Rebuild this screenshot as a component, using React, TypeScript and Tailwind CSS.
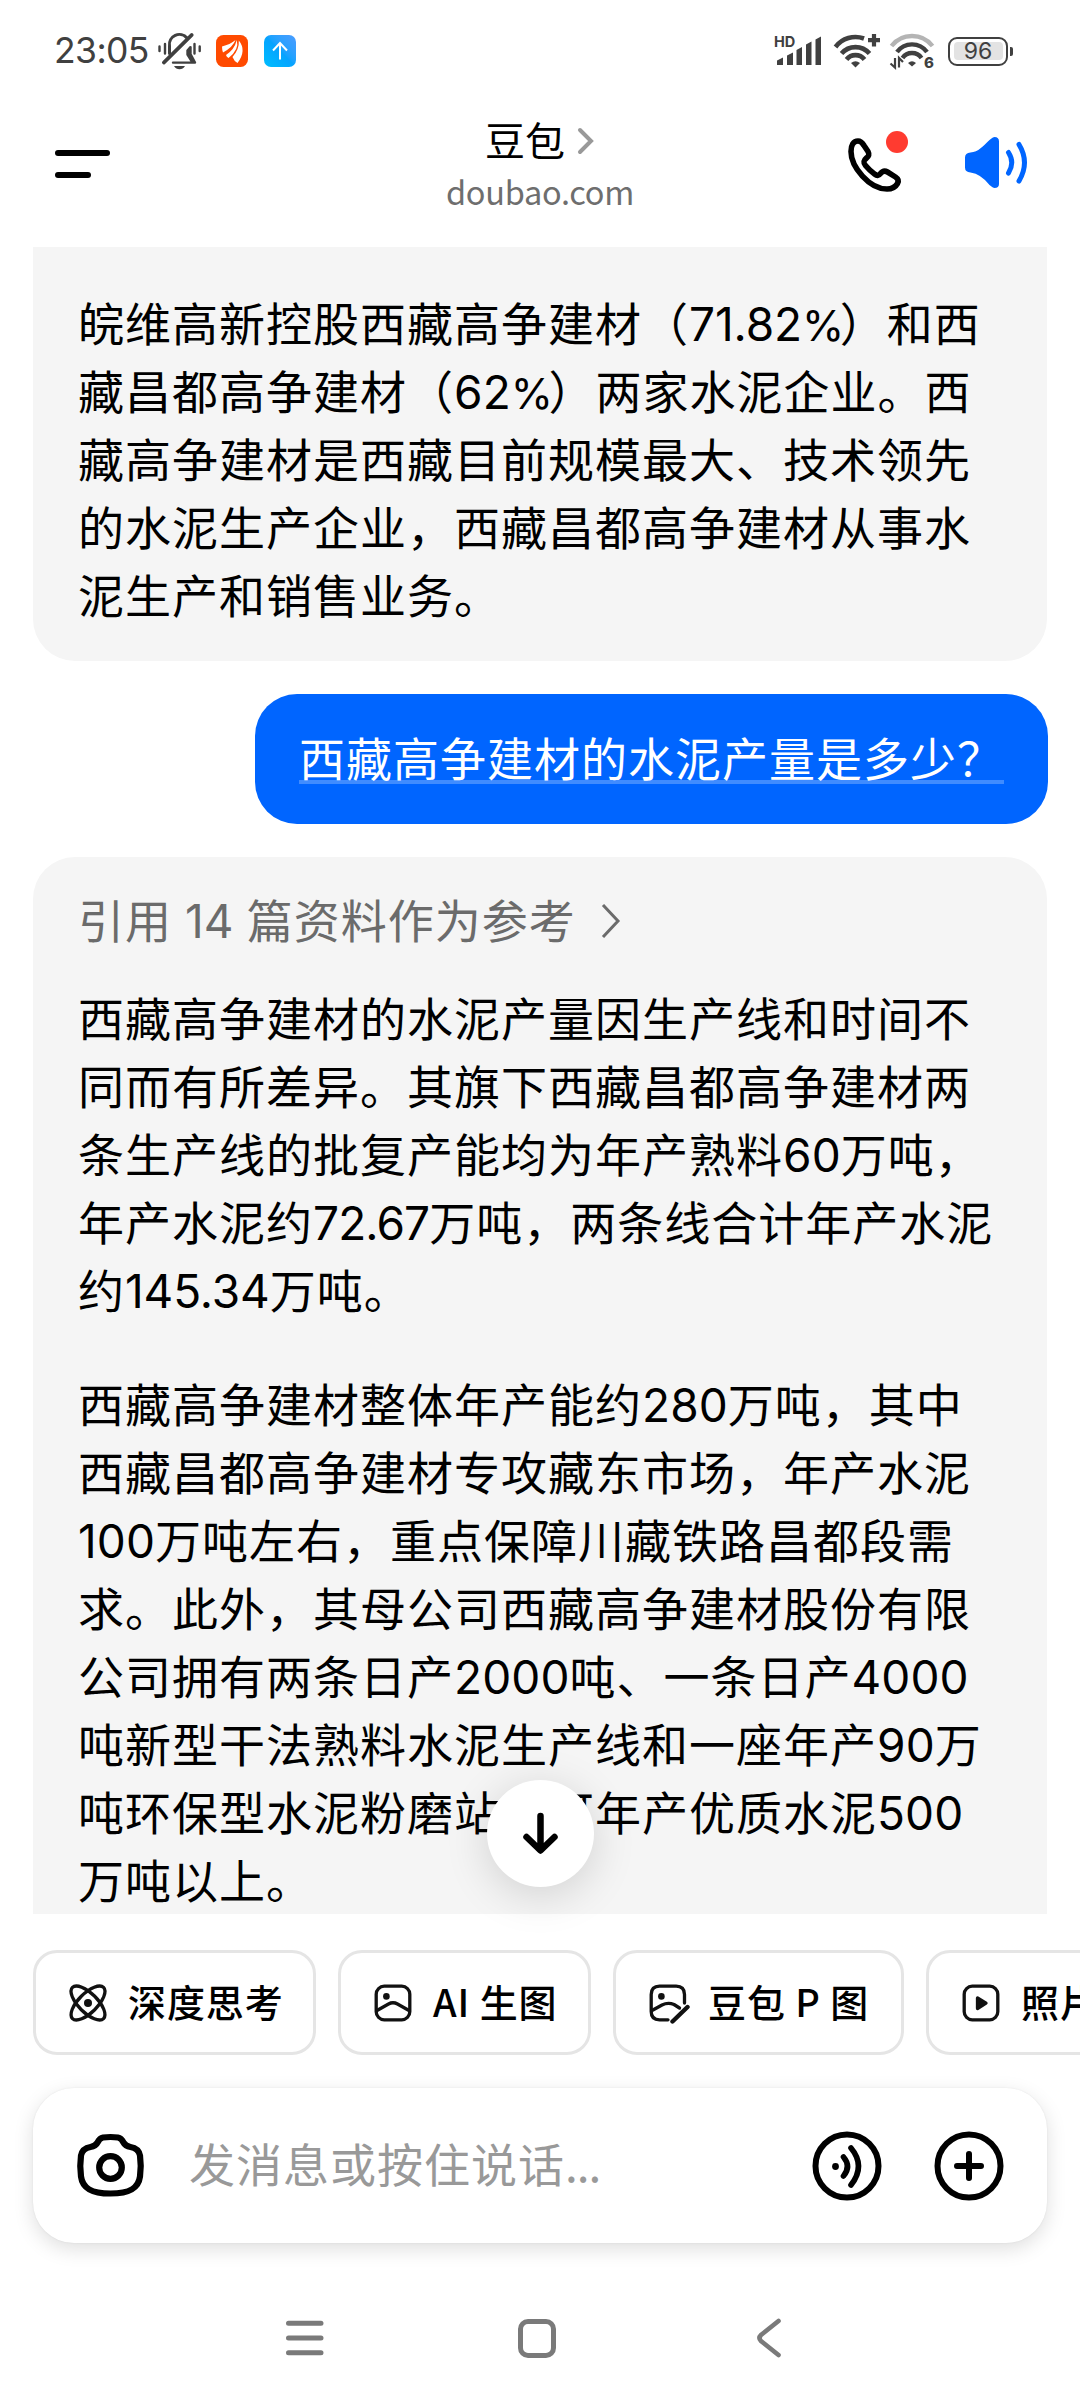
import type { ReactNode } from 'react';

const intro = [
  '皖维高新控股西藏高争建材（71.82%）和西',
  '藏昌都高争建材（62%）两家水泥企业。西',
  '藏高争建材是西藏目前规模最大、技术领先',
  '的水泥生产企业，西藏昌都高争建材从事水',
  '泥生产和销售业务。',
];

const answer = [
  [
    '西藏高争建材的水泥产量因生产线和时间不',
    '同而有所差异。其旗下西藏昌都高争建材两',
    '条生产线的批复产能均为年产熟料60万吨，',
    '年产水泥约72.67万吨，两条线合计年产水泥',
    '约145.34万吨。',
  ],
  [
    '西藏高争建材整体年产能约280万吨，其中',
    '西藏昌都高争建材专攻藏东市场，年产水泥',
    '100万吨左右，重点保障川藏铁路昌都段需',
    '求。此外，其母公司西藏高争建材股份有限',
    '公司拥有两条日产2000吨、一条日产4000',
    '吨新型干法熟料水泥生产线和一座年产90万',
    '吨环保型水泥粉磨站，可年产优质水泥500',
    '万吨以上。',
  ],
];

// Digits use a Latin face, the rest stays in the CJK one
function MixedText({ text }: { text: string }) {
  return (
    <>
      {text.split(/([\d.]+|%)/).map((part, i) => {
        if (part === '%') {
          return (
            <span key={i} className="font-[Inter] text-[43px] tracking-[-4.5px]">
              %
            </span>
          );
        }
        if (/^\d+\.\d+$/.test(part)) {
          return (
            <span
              key={i}
              className={`font-[Inter] ${part.endsWith('7') ? 'tracking-[-0.9px]' : 'tracking-[-0.1px]'}`}
            >
              {part}
            </span>
          );
        }
        if (/^\d+$/.test(part)) {
          return (
            <span key={i} className="font-[Inter] tracking-[0.1px]">
              {part}
            </span>
          );
        }
        return part;
      })}
    </>
  );
}

function Paragraph({ lines }: { lines: string[] }) {
  return (
    <p className="text-[46px] leading-[68px] tracking-[1px] text-black">
      {lines.map((line) => (
        <span key={line} className="block h-[68px] whitespace-nowrap">
          <MixedText text={line} />
        </span>
      ))}
    </p>
  );
}

function MutedBell() {
  return (
    <svg width="46" height="38" viewBox="0 0 46 38" fill="none" stroke="#404040" strokeWidth="3" strokeLinecap="round">
      <path d="M12.5 21.5V14a10 10 0 0 1 17.5-8" />
      <path d="M6.8 30.6 34.8 2.9" strokeWidth="3.6" />
      <path d="M16 30.6h22l-4.500-8.500v-7l-3 3.500v4l5 8" fill="#404040" strokeWidth="2.400" strokeLinejoin="round" />
      <path d="M17 34h11q-2 3.200-5.500 3.200T17 34Z" fill="#404040" stroke="none" />
      <path d="M2.500 14.500v4.500M8 12v9.500M37.500 12v9.500M42.700 14.500v4.500" strokeWidth="2.400" />
    </svg>
  );
}

function OrangeAppIcon() {
  return (
    <svg width="32" height="32" viewBox="0 0 32 32">
      <rect width="32" height="32" rx="7.500" fill="#ff4a00" />
      <g fill="#fff">
        <path d="M6 11.500Q14 9.500 19.500 5 17 12 7 17.500 6 14.500 6 11.500Z" />
        <path d="M10 20Q18.500 14.500 20.800 5 23.500 14.500 12.500 23 10.500 22 10 20Z" />
        <path d="M16.500 22Q23.500 14 22.800 5.500 31 15.500 21.500 28 18 26 16.500 22Z" />
      </g>
    </svg>
  );
}

function BlueAppIcon() {
  return (
    <div className="flex h-8 w-8 items-center justify-center rounded-[7px] bg-linear-to-tr from-[#00beff] via-[#06a3ff] to-[#4a9cff]">
      <svg width="32" height="32" viewBox="0 0 32 32" fill="none" stroke="#fff" strokeWidth="2">
        <path d="M16 8v16.500M9 15.500l7-7.500 7 7.500" />
      </svg>
    </div>
  );
}

function SignalIcon() {
  return (
    <svg className="overflow-visible" width="47" height="32" viewBox="0 0 47 32" fill="#404040">
      <text x="-1" y="11.500" fontFamily="Inter" fontSize="14.500" fontWeight="700">HD</text>
      <path d="M2 30v-4.500l6-3V30ZM12 30V20.500l6-3V30ZM21.500 30V15l5.500-3V30ZM31 30V9.500l5.500-3V30ZM40.500 30V4.500l5.500-3V30Z" />
    </svg>
  );
}

function WifiPlusIcon() {
  return (
    <svg width="48" height="34" viewBox="0 0 48 34" fill="none" stroke="#404040" strokeWidth="4.600">
      <path d="M2.500 13A25 25 0 0 1 31 4.500" />
      <path d="M8.500 19.500a18.500 18.500 0 0 1 28 0" />
      <path d="M13.500 25.500a11.500 11.500 0 0 1 18 0" />
      <path d="M18 29q4.500-3.500 9 0l-4.500 4.500Z" fill="#404040" stroke="none" />
      <path d="M35 6.200h12M41 0v12.500" strokeWidth="4.200" />
    </svg>
  );
}

function WifiSixIcon() {
  return (
    <svg className="overflow-visible" width="44" height="35" viewBox="0 0 44 35" fill="none" stroke="#404040" strokeWidth="4.400">
      <path d="M1.500 12a26 26 0 0 1 41 0" stroke="#b4b4b4" />
      <path d="M7 18a18.500 18.500 0 0 1 30 0" />
      <path d="M12.500 24a11.500 11.500 0 0 1 19 0" />
      <path d="M18 29q4-3.500 8 0l-4 3.500Z" fill="#404040" stroke="none" />
      <path d="M5 24v9.500l-4.500-4M9 33.500V24l4 4" strokeWidth="2.200" />
      <text x="34" y="33.500" fill="#404040" stroke="none" fontFamily="Inter" fontSize="15" fontWeight="800">6</text>
    </svg>
  );
}

function Battery() {
  return (
    <div className="flex items-center gap-[2px]">
      <div className="flex h-[29px] w-[60px] rounded-[9px] border-[2.5px] border-[#404040] p-[3.5px]">
        <div className="flex flex-1 items-center justify-center rounded-[4px] bg-[#e3e3e3] font-[Inter] text-[23px] leading-none text-[#404040]">
          96
        </div>
      </div>
      <div className="h-[9px] w-[3px] rounded-r-[2px] bg-[#404040]" />
    </div>
  );
}

function StatusBar() {
  return (
    <div className="flex h-[102px] items-center pr-[67px] pl-[54px]">
      <span className="w-[103px] font-[Inter] text-[35.5px] leading-none tracking-[-0.6px] text-[#404040]">23:05</span>
      <MutedBell />
      <div className="ml-[13px] flex gap-4">
        <OrangeAppIcon />
        <BlueAppIcon />
      </div>
      <div className="ml-auto flex items-center">
        <SignalIcon />
        <div className="ml-[11px]">
          <WifiPlusIcon />
        </div>
        <div className="ml-[9px]">
          <WifiSixIcon />
        </div>
        <div className="ml-[14px]">
          <Battery />
        </div>
      </div>
    </div>
  );
}

function PhoneIcon() {
  return (
    <svg width="58" height="58" viewBox="0 0 58 58" fill="none" stroke="#000" strokeWidth="5.600" strokeLinejoin="round">
      <path d="M5 15.500C5 9 7.500 5 12 5c3 0 4.500 2 6 4.500l4 6c1.500 3 1 4.500-1.500 6.500-3.500 3-3.500 4.500-1 7.500 2.500 3 5.500 6 9 8.500 2.500 2 4 2 6-.5 2-2.500 4.500-3 7-1.500l8 5c3 2 3.500 4 2 6.500-2 3.500-5 5.500-10.500 5.500C23.500 53 5 31 5 15.500Z" />
    </svg>
  );
}

function SpeakerIcon() {
  return (
    <svg width="64" height="52" viewBox="0 0 64 52" fill="none" stroke="#0065ff" strokeWidth="5" strokeLinecap="round">
      <path d="M0 20.500Q0 16 5.500 15.500C13.500 15 18 9 24.500 3Q28 0 29.500 0 34 0 34 4.500v42.500Q34 51 29.500 51 28 51 24.500 48 16 37 5.500 35.500 0 35 0 30.500Z" fill="#0065ff" stroke="none" />
      <path d="M43.500 15.500q6.500 10 0 20.500M54 7.500q11 18 0 36.500" />
    </svg>
  );
}

function Header() {
  return (
    <header className="grid h-[145px] grid-cols-3 items-start px-[53px]">
      <div className="mt-12 ml-[2px] flex flex-col gap-4">
        <div className="h-[6px] w-[55px] rounded-full bg-black" />
        <div className="h-[6px] w-[36px] rounded-full bg-black" />
      </div>
      <div className="mt-[8px] flex flex-col items-center">
        <div className="mr-[1px] flex items-center gap-[12px]">
          <h1 className="text-[40px] leading-[58px] font-normal text-black">豆包</h1>
          <svg className="mt-[3px]" width="17" height="28" viewBox="0 0 17 28" fill="none" stroke="#999" strokeWidth="4" strokeLinecap="round">
            <path d="m3 3 11 11L3 25" />
          </svg>
        </div>
        <span className="text-[32.5px] leading-[46px] tracking-[-0.3px] text-[#6e6e6e]">doubao.com</span>
      </div>
      <div className="mt-[34px] flex justify-end">
        <div className="relative mr-[61px]">
          <PhoneIcon />
          <div className="absolute -top-[5px] left-[40px] h-[22px] w-[22px] rounded-full bg-[#ff3b30]" />
        </div>
        <div className="mt-[1px] -mr-[2px]">
          <SpeakerIcon />
        </div>
      </div>
    </header>
  );
}

function Chat() {
  return (
    <div className="relative z-10">
      <main className="flex h-[1667px] flex-col overflow-hidden px-[33px]">
        <section className="rounded-b-[42px] bg-[#f5f5f5] pt-[40px] pr-[43px] pb-[34px] pl-[45px]">
          <Paragraph lines={intro} />
        </section>

        <div className="mt-[33px] -mr-[1px] h-[130px] w-[793px] shrink-0 self-end rounded-[42px] bg-[#0065ff] px-[44px] pt-[28px]">
          <p className="text-[46px] leading-[68px] tracking-[1px] whitespace-nowrap text-white underline decoration-[#408cff] decoration-4 underline-offset-[4px] [text-decoration-skip-ink:none]">
            西藏高争建材的水泥产量是多少？
          </p>
        </div>

        <section className="mt-[33px] h-[1200px] shrink-0 rounded-t-[42px] bg-[#f5f5f5] pt-[28px] pr-[43px] pl-[45px]">
          <button className="flex h-[68px] items-center text-[46px] leading-[68px] tracking-[1px] text-[#6b6b6b]">
            <span>
              引用
              <span className="mr-[13px] ml-[13px]">
                <MixedText text="14" />
              </span>
              篇资料作为参考
            </span>
            <svg className="mt-[4px] ml-[25px]" width="20" height="34" viewBox="0 0 20 34" fill="none" stroke="currentColor" strokeWidth="3">
              <path d="m2 1 15 16L2 33" />
            </svg>
          </button>
          <div className="mt-[29px] flex flex-col gap-[46px]">
            {answer.map((lines) => (
              <Paragraph key={lines[0]} lines={lines} />
            ))}
          </div>
        </section>
      </main>

      {/* Scroll to bottom */}
      <button className="absolute bottom-[27px] left-[487px] h-[107px] w-[107px] rounded-full bg-white shadow-[0_8px_44px_rgba(0,0,0,0.15)]">
        <svg width="107" height="107" viewBox="0 0 107 107" fill="none" stroke="#000" strokeWidth="6.500" strokeLinecap="round" strokeLinejoin="round">
          <path d="M53.500 36v34M39.500 57l14 13.500 14-13.500" />
        </svg>
      </button>
    </div>
  );
}

function ChipIcon({ children }: { children: ReactNode }) {
  return (
    <svg width="44" height="44" viewBox="0 0 44 44" fill="none" stroke="#111" strokeWidth="3.300" strokeLinecap="round" strokeLinejoin="round">
      {children}
    </svg>
  );
}

const chips = [
  {
    label: '深度思考',
    width: 'w-[283px]',
    icon: (
      <ChipIcon>
        <ellipse cx="22" cy="22" rx="22" ry="9.500" transform="rotate(45 22 22)" />
        <ellipse cx="22" cy="22" rx="22" ry="9.500" transform="rotate(-45 22 22)" />
        <circle cx="22" cy="22" r="4" fill="#111" stroke="none" />
      </ChipIcon>
    ),
  },
  {
    label: 'AI 生图',
    width: 'w-[253px]',
    icon: (
      <ChipIcon>
        <rect x="5.200" y="5.200" width="33.600" height="33.600" rx="8" />
        <path d="m6 29.500 11.500-6.500q4.500-2.500 9 0L38 29.500" />
        <circle cx="15.400" cy="15.400" r="3.300" fill="#111" stroke="none" />
      </ChipIcon>
    ),
  },
  {
    label: '豆包 P 图',
    width: 'w-[291px]',
    icon: (
      <ChipIcon>
        <path d="M38.500 22V13.500q0-8.300-8.300-8.300H13.500q-8.300 0-8.300 8.300v17q0 8.300 8.300 8.300H22" />
        <path d="m6 29.500 10-5.500q6-3 12-.5l5.500 3.500" />
        <path d="M26.500 40.500 41.500 26" strokeWidth="4.400" />
        <circle cx="15.400" cy="15.400" r="3.300" fill="#111" stroke="none" />
      </ChipIcon>
    ),
  },
  {
    label: '照片动起来',
    width: 'w-[322px]',
    icon: (
      <ChipIcon>
        <rect x="5.200" y="5.200" width="33.600" height="33.600" rx="8" />
        <path d="M18.500 17v10.500l8.500-5.300Z" fill="#111" />
      </ChipIcon>
    ),
  },
];

function Chips() {
  return (
    <div className="mt-9 flex gap-[22px] overflow-hidden pl-[33px]">
      {chips.map((chip) => (
        <button
          key={chip.label}
          className={`${chip.width} flex h-[105px] shrink-0 items-center gap-[18px] rounded-[24px] border-3 border-[#e5e5e5] pl-[30px] text-[38px] font-medium tracking-[0.9px] whitespace-nowrap text-black`}
        >
          {chip.icon}
          <span className="-mt-[4px]">{chip.label}</span>
        </button>
      ))}
    </div>
  );
}

function InputBar() {
  return (
    <div className="mx-[33px] mt-[33px] flex h-[155px] items-center rounded-[41px] bg-white pr-[43px] pl-[43px] shadow-[0_6px_20px_rgba(0,0,0,0.13),0_0_2px_rgba(0,0,0,0.08)]">
      <svg width="70" height="68" viewBox="0 0 70 68" fill="none" stroke="#000" strokeWidth="6.200" strokeLinejoin="round">
        <path d="M27 5.500q7.500-1 15 0c3 .5 4 2 5.500 5 1.500 3 4 4 7 4.500 6 1 8.500 3.500 9.500 8.500q1.500 11 0 21C62.500 56 54 61.500 34.500 61.500S6.500 56 5 44.500q-1.500-10 0-21c1-5 3.500-7.500 9.500-8.500 3-.5 5.500-1.500 7-4.500 1.500-3 2.500-4.500 5.500-5Z" />
        <circle cx="34.500" cy="35.500" r="11.300" />
      </svg>
      <span className="-mt-[7px] ml-[43px] flex-1 text-[46px] leading-[68px] tracking-[1px] text-[#999]">
        发消息或按住说话<span className="tracking-[-1px]">...</span>
      </span>
      <svg width="70" height="70" viewBox="0 0 70 70" fill="none" stroke="#000" strokeWidth="5.600" strokeLinecap="round">
        <circle cx="35" cy="35" r="31.500" strokeWidth="6" />
        <path d="M31.500 26q8 9.500 0 19M39 17q15 18 0 37" />
        <circle cx="23.500" cy="35.500" r="3.400" fill="#000" stroke="none" />
      </svg>
      <svg className="ml-[52px]" width="70" height="70" viewBox="0 0 70 70" fill="none" stroke="#000" strokeWidth="6" strokeLinecap="round">
        <circle cx="35" cy="35" r="31.500" />
        <path d="M23 35h24M35 23v24" />
      </svg>
    </div>
  );
}

function NavBar() {
  return (
    <nav className="mt-[73px] flex items-center pl-[286px]">
      <svg width="38" height="44" viewBox="0 0 38 44" fill="none" stroke="#7a7a7a" strokeWidth="5" strokeLinecap="round">
        <path d="M2.500 7.300h32.500M2.500 22h32.500M2.500 36.700h32.500" />
      </svg>
      <div className="ml-[194px] h-[39px] w-[38px] rounded-[10px] border-5 border-[#7a7a7a]" />
      <svg className="ml-[200px]" width="26" height="44" viewBox="0 0 26 44" fill="none" stroke="#7a7a7a" strokeWidth="4.600" strokeLinecap="round">
        <path d="M22.500 5 5 19q-3 3 0 6l17.500 14" />
      </svg>
    </nav>
  );
}

export default function App() {
  return (
    <div className="h-[2400px] w-[1080px] overflow-hidden bg-white font-['Noto_Sans_CJK_SC',sans-serif]">
      <StatusBar />
      <Header />
      <Chat />
      <Chips />
      <InputBar />
      <NavBar />
    </div>
  );
}
